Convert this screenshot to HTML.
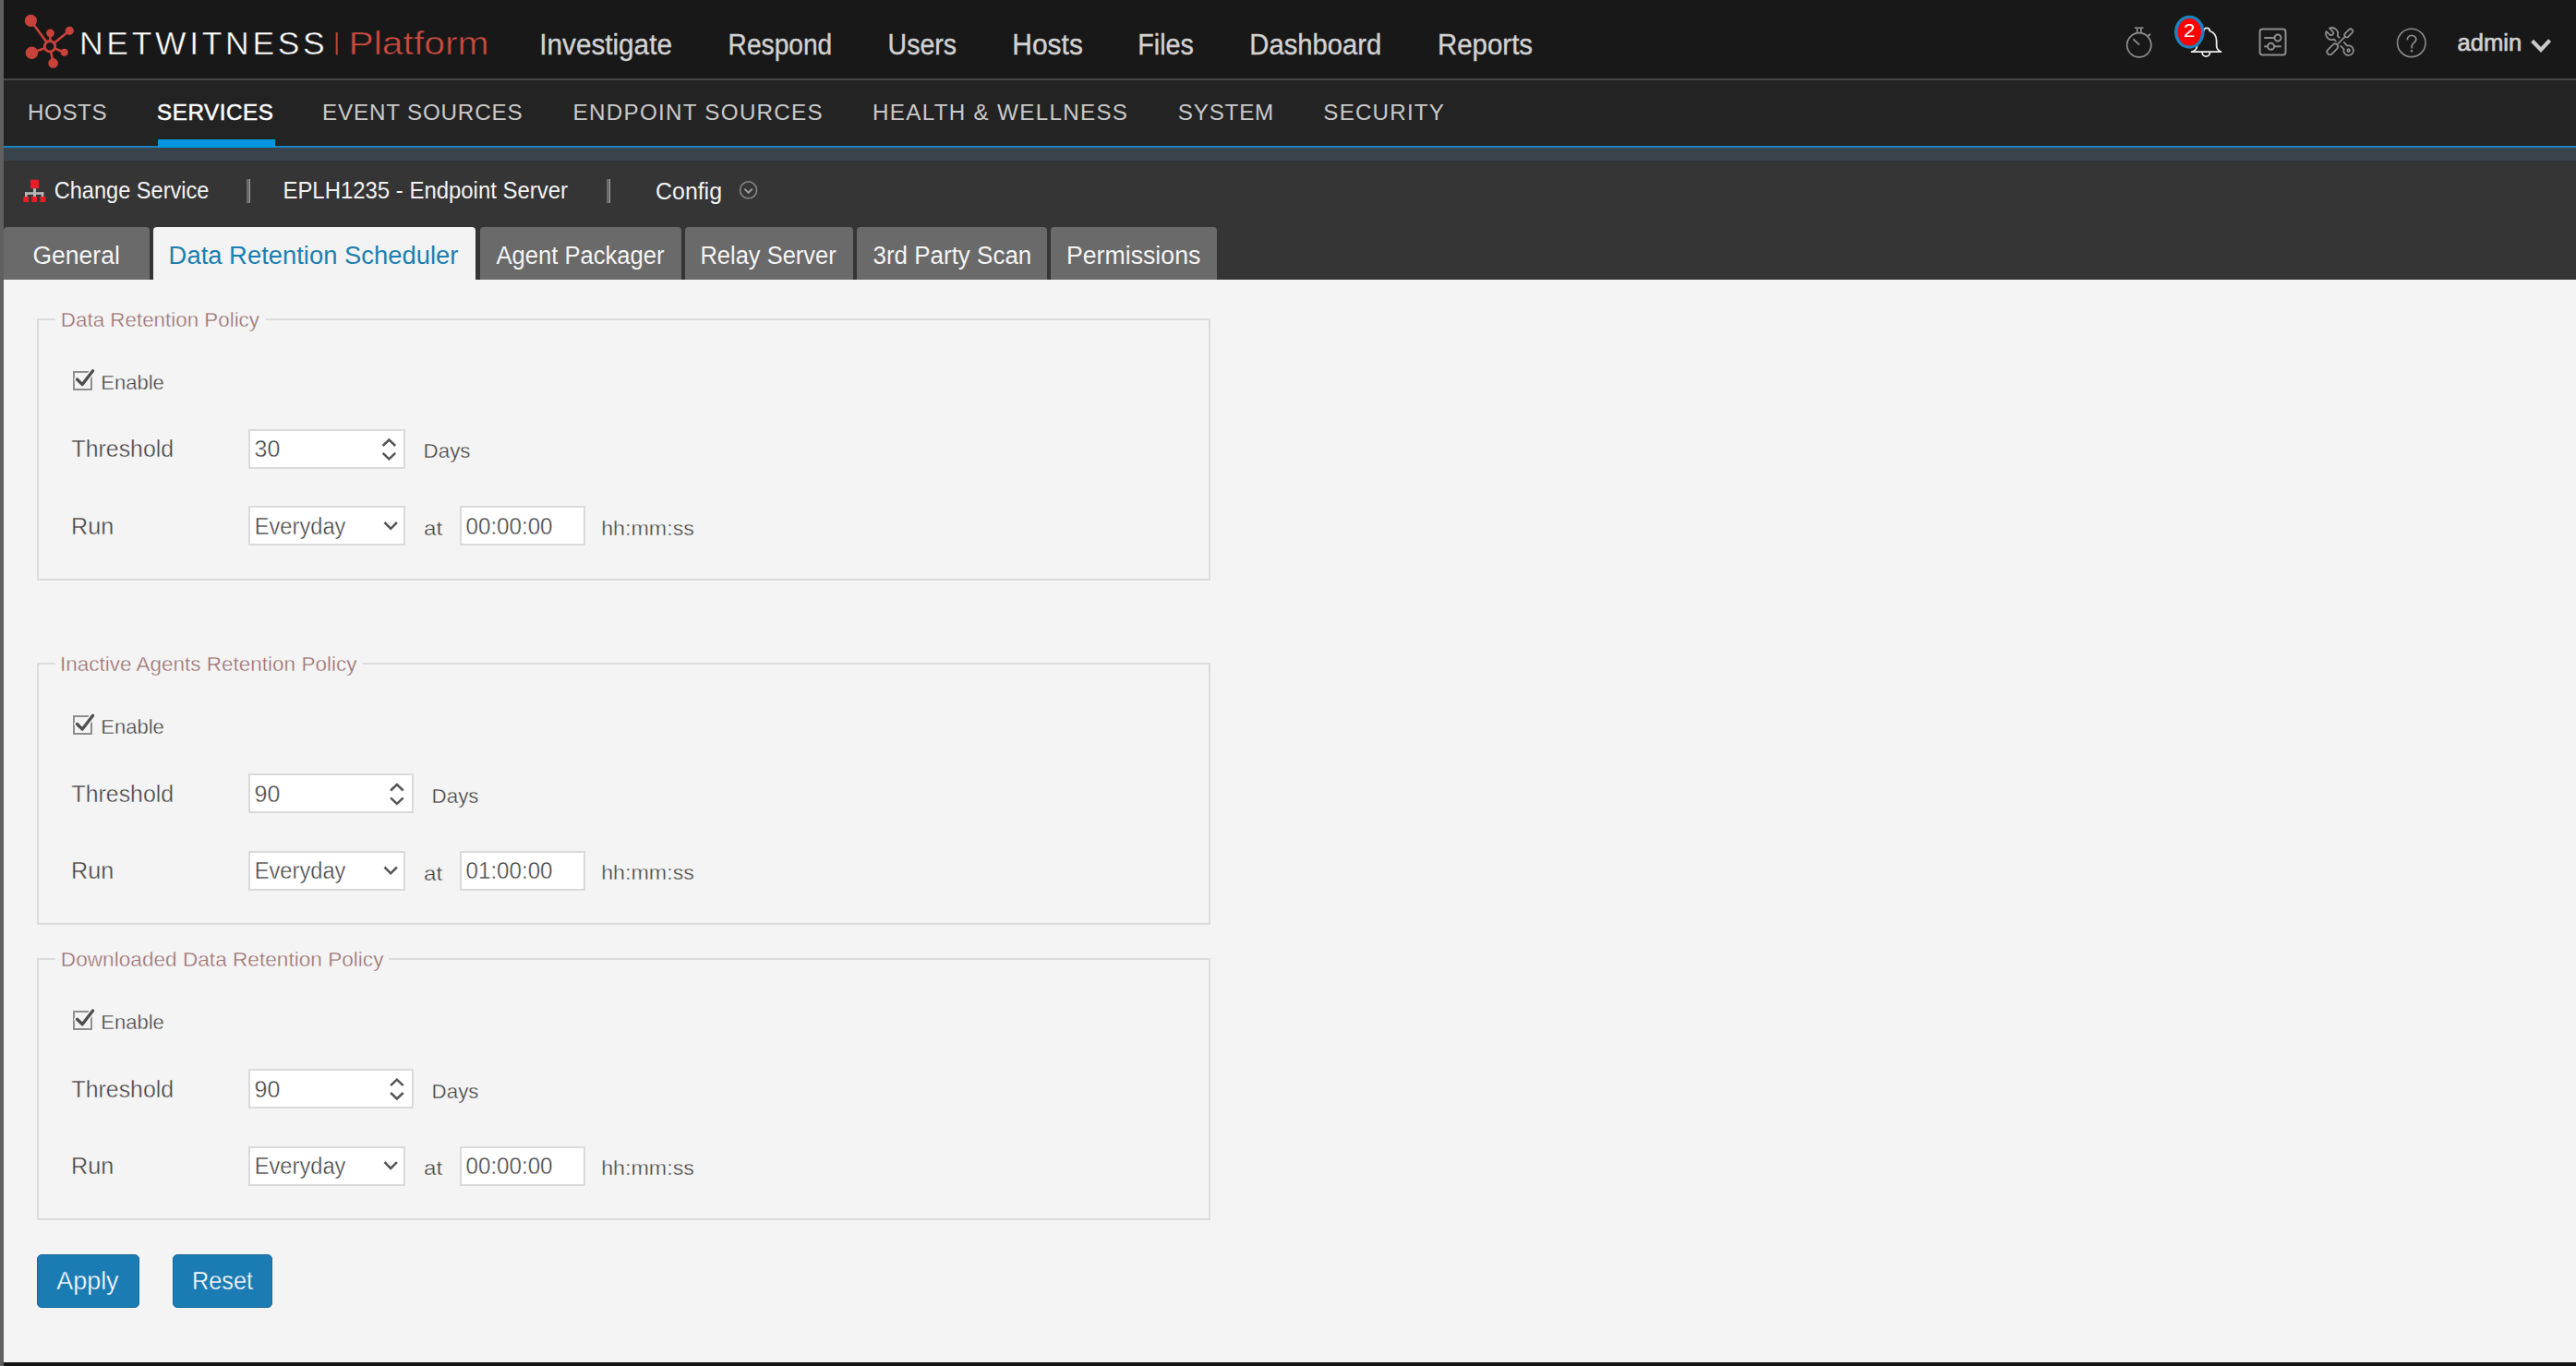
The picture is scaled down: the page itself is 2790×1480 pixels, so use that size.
<!DOCTYPE html><html><head><meta charset="utf-8"><title>NetWitness Platform - Data Retention Scheduler</title><style>html,body{margin:0;padding:0;}body{width:2790px;height:1480px;overflow:hidden;position:relative;background:#f4f4f4;font-family:"Liberation Sans", sans-serif;}.a{position:absolute;box-sizing:border-box;}svg{position:absolute;left:0;top:0;}svg text{font-family:"Liberation Sans",sans-serif;white-space:pre;}</style></head><body><header>
<div class="a" style="left:0px;top:0px;width:2790px;height:85px;background:#181818"></div>
<div class="a" style="left:0px;top:85px;width:2790px;height:2px;background:#474747"></div>
</header><nav>
<div class="a" style="left:0px;top:87px;width:2790px;height:71px;background:#232323"></div>
<div class="a" style="left:0px;top:158px;width:2790px;height:2px;background:#1983bf"></div>
<div class="a" style="left:170.5px;top:151px;width:127px;height:9px;background:#0096df"></div>
<div class="a" style="left:0px;top:160px;width:2790px;height:14px;background:#39434b"></div>
</nav><section>
<div class="a" style="left:0px;top:174px;width:2790px;height:129px;background:#353535"></div>
<div class="a" style="left:267px;top:194px;width:3px;height:26px;background:#696969"></div>
<div class="a" style="left:270px;top:194px;width:1px;height:26px;background:#9e9e9e"></div>
<div class="a" style="left:657px;top:194px;width:3px;height:26px;background:#696969"></div>
<div class="a" style="left:660px;top:194px;width:1px;height:26px;background:#9e9e9e"></div>
<div class="a" style="left:4px;top:246px;width:158px;height:57px;background:#6a6a6a;border-radius:4px 4px 0 0"></div>
<div class="a" style="left:166px;top:246px;width:349px;height:57px;background:#f3f3f3;border-radius:4px 4px 0 0"></div>
<div class="a" style="left:520px;top:246px;width:218px;height:57px;background:#6a6a6a;border-radius:4px 4px 0 0"></div>
<div class="a" style="left:742px;top:246px;width:182px;height:57px;background:#6a6a6a;border-radius:4px 4px 0 0"></div>
<div class="a" style="left:928px;top:246px;width:206px;height:57px;background:#6a6a6a;border-radius:4px 4px 0 0"></div>
<div class="a" style="left:1138px;top:246px;width:180px;height:57px;background:#6a6a6a;border-radius:4px 4px 0 0"></div>
</section><main>
<div class="a" style="left:0px;top:303px;width:2790px;height:1173px;background:#f4f4f4"></div>
<div class="a" style="left:40px;top:345px;width:1271px;height:284px;border:2px solid #dcdcdc"></div>
<div class="a" style="left:60px;top:343px;width:228px;height:6px;background:#f4f4f4"></div>
<div class="a" style="left:79px;top:402px;width:21px;height:21px;border:2px solid #8e8e8e;background:#f4f4f4"></div>
<div class="a" style="left:269px;top:465px;width:170px;height:43px;border:2px solid #dadada;background:#fff"></div>
<div class="a" style="left:269px;top:548px;width:170px;height:43px;border:2px solid #dadada;background:#fff"></div>
<div class="a" style="left:498px;top:548px;width:136px;height:43px;border:2px solid #dadada;background:#fff"></div>
<div class="a" style="left:40px;top:718px;width:1271px;height:284px;border:2px solid #dcdcdc"></div>
<div class="a" style="left:60px;top:716px;width:333px;height:6px;background:#f4f4f4"></div>
<div class="a" style="left:79px;top:775px;width:21px;height:21px;border:2px solid #8e8e8e;background:#f4f4f4"></div>
<div class="a" style="left:269px;top:838px;width:179px;height:43px;border:2px solid #dadada;background:#fff"></div>
<div class="a" style="left:269px;top:922px;width:170px;height:43px;border:2px solid #dadada;background:#fff"></div>
<div class="a" style="left:498px;top:922px;width:136px;height:43px;border:2px solid #dadada;background:#fff"></div>
<div class="a" style="left:40px;top:1038px;width:1271px;height:284px;border:2px solid #dcdcdc"></div>
<div class="a" style="left:60px;top:1036px;width:361px;height:6px;background:#f4f4f4"></div>
<div class="a" style="left:79px;top:1095px;width:21px;height:21px;border:2px solid #8e8e8e;background:#f4f4f4"></div>
<div class="a" style="left:269px;top:1158px;width:179px;height:43px;border:2px solid #dadada;background:#fff"></div>
<div class="a" style="left:269px;top:1242px;width:170px;height:43px;border:2px solid #dadada;background:#fff"></div>
<div class="a" style="left:498px;top:1242px;width:136px;height:43px;border:2px solid #dadada;background:#fff"></div>
<div class="a" style="left:40px;top:1358.5px;width:110.5px;height:58px;background:#1b7cb4;border:1px solid #15699c;border-radius:5px"></div>
<div class="a" style="left:187.3px;top:1358.5px;width:108px;height:58px;background:#1b7cb4;border:1px solid #15699c;border-radius:5px"></div>
</main>
<div class="a" style="left:0px;top:1476px;width:2790px;height:4px;background:#141414"></div>
<div class="a" style="left:0px;top:0px;width:4px;height:1480px;background:#606060"></div><svg width="2790" height="1480" viewBox="0 0 2790 1480"><g fill="#c9423a" stroke="#c9423a">
<g stroke-width="2.6" stroke-linecap="round"><line x1="33.4" y1="22.4" x2="54" y2="50.2"/><line x1="54.5" y1="35.8" x2="54.3" y2="50"/><line x1="75.3" y1="33.3" x2="54" y2="50.2"/><line x1="34.4" y1="57.3" x2="54" y2="50.2"/><line x1="69.7" y1="56.7" x2="54" y2="50.2"/><line x1="57.6" y1="68.4" x2="54" y2="50.2"/></g>
<g stroke="none"><circle cx="33.4" cy="22.4" r="6.6"/><circle cx="54.5" cy="35.8" r="4.4"/><circle cx="75.3" cy="33.3" r="4.6"/><circle cx="34.4" cy="57.3" r="6.7"/><circle cx="69.7" cy="56.7" r="4"/><circle cx="57.6" cy="68.4" r="5.3"/></g>
<circle cx="54" cy="50.2" r="5.7" fill="#181818" stroke-width="2.8"/>
</g>
<rect x="363.7" y="35" width="2" height="24.4" fill="#c0453b"/>
<g fill="none" stroke="#8c8c8c" stroke-width="1.7">
<circle cx="2316.8" cy="48.8" r="13.1"/>
<line x1="2312" y1="30.2" x2="2321.6" y2="30.2" stroke-width="1.6"/>
<line x1="2314.7" y1="30.5" x2="2314.7" y2="35.7"/><line x1="2318.9" y1="30.5" x2="2318.9" y2="35.7"/>
<line x1="2326.6" y1="39" x2="2329" y2="36.8" stroke-width="2.2"/>
<line x1="2310.4" y1="42.4" x2="2317.2" y2="48.6" stroke-width="1.9"/>
</g>
<g fill="none" stroke="#eeeeee" stroke-width="1.8" stroke-linejoin="round" stroke-linecap="round">
<path d="M2373.6 56.2 H2405.4"/>
<path d="M2374.6 56 C2377.6 54.6 2379.4 53 2379.5 50 V44.5 C2379.5 38.8 2382.2 35.2 2386.9 33.5 A3 3 0 0 1 2393.3 33.5 C2398 35.2 2400.7 38.8 2400.7 44.5 V50 C2400.8 53 2402.4 54.6 2405.2 56"/>
<path d="M2385.2 57 A4.1 4.1 0 0 0 2393.4 57"/>
</g>
<ellipse cx="2371.3" cy="34.7" rx="16.3" ry="18" fill="#1a82bd"/>
<ellipse cx="2371.3" cy="34.7" rx="12.7" ry="14.8" fill="#ff0000"/>
<g fill="none" stroke="#8c8c8c" stroke-width="2">
<rect x="2447.6" y="31.6" width="27.9" height="27.9" rx="3"/>
<line x1="2452.2" y1="41" x2="2463.3" y2="41"/><circle cx="2467" cy="41" r="3.5"/>
<line x1="2452.2" y1="50.3" x2="2456" y2="50.3"/><circle cx="2459.6" cy="50.3" r="3.5"/><line x1="2463.2" y1="50.3" x2="2470.8" y2="50.3"/>
</g>
<g fill="none" stroke="#8c8c8c" stroke-width="1.8" stroke-linejoin="round">
<g transform="translate(2525.6 36.6) rotate(45)"><path d="M-6.04 -2.4 A6.5 6.5 0 0 1 5.96 -2.6 L20.9 -2.6 A5.3 5.3 0 1 1 20.9 2.6 L5.96 2.6 A6.5 6.5 0 0 1 -6.04 2.4 L-1.2 2.4 A2.4 2.4 0 0 0 -1.2 -2.4 Z"/><circle cx="25.5" cy="0" r="1.3"/></g>
<g transform="translate(2521.3 58.3) rotate(-45)"><line x1="13" y1="0" x2="27.5" y2="0" stroke="#181818" stroke-width="6"/><rect x="-1" y="-4.3" width="16" height="8.6" rx="4.3" fill="#181818" stroke="#181818" stroke-width="3"/><rect x="0" y="-3.1" width="14" height="6.2" rx="3.1"/><line x1="14" y1="0" x2="27" y2="0"/><rect x="26.5" y="-2.4" width="10.5" height="4.8" rx="2.4"/></g>
</g>
<g fill="none" stroke="#8c8c8c" stroke-width="1.6">
<circle cx="2611.8" cy="46.4" r="15.2"/>
<path d="M2607.3 43.2 C2607.3 40 2609.5 38.3 2612 38.3 C2614.7 38.3 2616.8 40.2 2616.8 42.8 C2616.8 46 2612.2 46.8 2612.2 50 V52.5" stroke-width="1.8"/>
</g><circle cx="2612" cy="55.3" r="1.3" fill="#8c8c8c"/>
<path d="M2742.6 44.2 L2752 54 L2761.6 43.6" fill="none" stroke="#c8c8c8" stroke-width="4.2" stroke-linejoin="miter"/>
<rect x="32.9" y="194.7" width="9.2" height="9.5" fill="#e61e28"/>
<g fill="#b8b8b8"><rect x="36" y="204.2" width="3" height="5.5"/><rect x="27" y="208.2" width="20.3" height="2.6"/><rect x="27" y="208.2" width="2.5" height="5"/><rect x="36" y="208.2" width="3" height="5"/><rect x="44.8" y="208.2" width="2.5" height="5"/></g>
<g fill="#e61e28"><rect x="25.3" y="213" width="5.8" height="6" /><rect x="34.2" y="213" width="5.9" height="6"/><rect x="43.4" y="213" width="6" height="6"/></g>
<circle cx="810.6" cy="205.9" r="9" fill="none" stroke="#7f7f7f" stroke-width="1.8"/>
<path d="M806.4 204.6 L810.6 208.8 L814.8 204.6" fill="none" stroke="#9a9a9a" stroke-width="2"/>
<path d="M83.5 411 L89.2 416.6 L100.6 401.8" fill="none" stroke="#f4f4f4" stroke-width="6.4" stroke-linecap="round" stroke-linejoin="round" transform="translate(0 0.00)"/>
<path d="M83.5 411 L89.2 416.6 L100.6 401.8" fill="none" stroke="#4e4e4e" stroke-width="3.3" stroke-linecap="round" stroke-linejoin="round" transform="translate(0 0.00)"/>
<path d="M414.60 483 L421.40 476.5 L428.20 483 M414.60 490.8 L421.40 497.3 L428.20 490.8" fill="none" stroke="#555" stroke-width="2.5" stroke-linejoin="miter" transform="translate(0 0.00)"/>
<path d="M416.5 566 L423.2 572.8 L429.9 566" fill="none" stroke="#555" stroke-width="2.5" transform="translate(0 0.00)"/>
<path d="M83.5 411 L89.2 416.6 L100.6 401.8" fill="none" stroke="#f4f4f4" stroke-width="6.4" stroke-linecap="round" stroke-linejoin="round" transform="translate(0 373.50)"/>
<path d="M83.5 411 L89.2 416.6 L100.6 401.8" fill="none" stroke="#4e4e4e" stroke-width="3.3" stroke-linecap="round" stroke-linejoin="round" transform="translate(0 373.50)"/>
<path d="M423.10 483 L429.90 476.5 L436.70 483 M423.10 490.8 L429.90 497.3 L436.70 490.8" fill="none" stroke="#555" stroke-width="2.5" stroke-linejoin="miter" transform="translate(0 373.50)"/>
<path d="M416.5 566 L423.2 572.8 L429.9 566" fill="none" stroke="#555" stroke-width="2.5" transform="translate(0 373.50)"/>
<path d="M83.5 411 L89.2 416.6 L100.6 401.8" fill="none" stroke="#f4f4f4" stroke-width="6.4" stroke-linecap="round" stroke-linejoin="round" transform="translate(0 693.20)"/>
<path d="M83.5 411 L89.2 416.6 L100.6 401.8" fill="none" stroke="#4e4e4e" stroke-width="3.3" stroke-linecap="round" stroke-linejoin="round" transform="translate(0 693.20)"/>
<path d="M423.10 483 L429.90 476.5 L436.70 483 M423.10 490.8 L429.90 497.3 L436.70 490.8" fill="none" stroke="#555" stroke-width="2.5" stroke-linejoin="miter" transform="translate(0 693.20)"/>
<path d="M416.5 566 L423.2 572.8 L429.9 566" fill="none" stroke="#555" stroke-width="2.5" transform="translate(0 693.20)"/><text id="nw" x="86.06" y="59.00" font-size="35.50" font-weight="normal" fill="#ffffff" stroke="#181818" stroke-width="0.5" textLength="265.74" lengthAdjust="spacing">NETWITNESS</text>
<text id="plat" x="377.40" y="59.40" font-size="35.50" font-weight="normal" fill="#cf4b40" stroke="#181818" stroke-width="0.6" textLength="152.30" lengthAdjust="spacingAndGlyphs">Platform</text>
<text id="nav0" x="584.30" y="58.60" font-size="30.60" font-weight="normal" fill="#d2d2d2" stroke="#d2d2d2" stroke-width="0.35" textLength="143.60" lengthAdjust="spacingAndGlyphs">Investigate</text>
<text id="nav1" x="788.62" y="58.60" font-size="30.60" font-weight="normal" fill="#d2d2d2" stroke="#d2d2d2" stroke-width="0.35" textLength="112.60" lengthAdjust="spacingAndGlyphs">Respond</text>
<text id="nav2" x="961.62" y="58.60" font-size="30.60" font-weight="normal" fill="#d2d2d2" stroke="#d2d2d2" stroke-width="0.35" textLength="74.44" lengthAdjust="spacingAndGlyphs">Users</text>
<text id="nav3" x="1096.30" y="58.60" font-size="30.60" font-weight="normal" fill="#d2d2d2" stroke="#d2d2d2" stroke-width="0.35" textLength="76.60" lengthAdjust="spacingAndGlyphs">Hosts</text>
<text id="nav4" x="1232.30" y="58.60" font-size="30.60" font-weight="normal" fill="#d2d2d2" stroke="#d2d2d2" stroke-width="0.35" textLength="60.60" lengthAdjust="spacingAndGlyphs">Files</text>
<text id="nav5" x="1353.30" y="58.60" font-size="30.60" font-weight="normal" fill="#d2d2d2" stroke="#d2d2d2" stroke-width="0.35" textLength="142.92" lengthAdjust="spacingAndGlyphs">Dashboard</text>
<text id="nav6" x="1556.88" y="58.60" font-size="30.60" font-weight="normal" fill="#d2d2d2" stroke="#d2d2d2" stroke-width="0.35" textLength="103.18" lengthAdjust="spacingAndGlyphs">Reports</text>
<text id="admin" x="2661.58" y="55.30" font-size="26.00" font-weight="normal" fill="#d0d0d0" stroke="#d0d0d0" stroke-width="0.7" textLength="69.70" lengthAdjust="spacingAndGlyphs">admin</text>
<text id="badge" x="2364.94" y="40.00" font-size="20.30" font-weight="normal" fill="#ffffff" textLength="12.46" lengthAdjust="spacingAndGlyphs">2</text>
<text id="sub0" x="30.04" y="130.00" font-size="24.20" font-weight="normal" fill="#c9c9c9" textLength="85.52" lengthAdjust="spacing">HOSTS</text>
<text id="sub1" x="170.10" y="130.00" font-size="24.20" font-weight="normal" fill="#ffffff" stroke="#ffffff" stroke-width="0.5" textLength="125.78" lengthAdjust="spacing">SERVICES</text>
<text id="sub2" x="349.04" y="130.00" font-size="24.20" font-weight="normal" fill="#c9c9c9" textLength="216.52" lengthAdjust="spacing">EVENT SOURCES</text>
<text id="sub3" x="620.62" y="130.00" font-size="24.20" font-weight="normal" fill="#c9c9c9" textLength="270.02" lengthAdjust="spacing">ENDPOINT SOURCES</text>
<text id="sub4" x="945.04" y="130.00" font-size="24.20" font-weight="normal" fill="#c9c9c9" textLength="275.94" lengthAdjust="spacing">HEALTH &amp; WELLNESS</text>
<text id="sub5" x="1275.86" y="130.00" font-size="24.20" font-weight="normal" fill="#c9c9c9" textLength="103.36" lengthAdjust="spacing">SYSTEM</text>
<text id="sub6" x="1433.36" y="130.00" font-size="24.20" font-weight="normal" fill="#c9c9c9" textLength="130.54" lengthAdjust="spacing">SECURITY</text>
<text id="chg" x="58.68" y="215.30" font-size="26.30" font-weight="normal" fill="#f2f2f2" textLength="167.80" lengthAdjust="spacingAndGlyphs">Change Service</text>
<text id="epl" x="306.46" y="215.30" font-size="26.30" font-weight="normal" fill="#f2f2f2" textLength="308.54" lengthAdjust="spacingAndGlyphs">EPLH1235 - Endpoint Server</text>
<text id="cfg" x="710.10" y="215.50" font-size="26.30" font-weight="normal" fill="#f2f2f2" textLength="71.88" lengthAdjust="spacingAndGlyphs">Config</text>
<text id="tab0" x="35.44" y="285.50" font-size="27.00" font-weight="normal" fill="#f4f4f4" textLength="94.44" lengthAdjust="spacingAndGlyphs">General</text>
<text id="tab1" x="182.62" y="285.50" font-size="27.00" font-weight="normal" fill="#1c7fb2" textLength="313.88" lengthAdjust="spacingAndGlyphs">Data Retention Scheduler</text>
<text id="tab2" x="537.42" y="285.50" font-size="27.00" font-weight="normal" fill="#f4f4f4" textLength="182.08" lengthAdjust="spacingAndGlyphs">Agent Packager</text>
<text id="tab3" x="758.46" y="285.50" font-size="27.00" font-weight="normal" fill="#f4f4f4" textLength="147.28" lengthAdjust="spacingAndGlyphs">Relay Server</text>
<text id="tab4" x="945.44" y="285.50" font-size="27.00" font-weight="normal" fill="#f4f4f4" textLength="171.86" lengthAdjust="spacingAndGlyphs">3rd Party Scan</text>
<text id="tab5" x="1154.88" y="285.50" font-size="27.00" font-weight="normal" fill="#f4f4f4" textLength="145.52" lengthAdjust="spacingAndGlyphs">Permissions</text>
<text id="leg0" x="65.86" y="353.50" font-size="21.70" font-weight="normal" fill="#9a6e6e" stroke="#f4f4f4" stroke-width="0.35" textLength="215.14" lengthAdjust="spacingAndGlyphs">Data Retention Policy</text>
<text id="en0" x="109.28" y="421.80" font-size="22.40" font-weight="normal" fill="#434343" stroke="#f4f4f4" stroke-width="0.35" textLength="68.62" lengthAdjust="spacingAndGlyphs">Enable</text>
<text id="th0" x="77.60" y="495.40" font-size="26.50" font-weight="normal" fill="#434343" stroke="#f4f4f4" stroke-width="0.4" textLength="110.46" lengthAdjust="spacingAndGlyphs">Threshold</text>
<text id="num0" x="275.60" y="495.30" font-size="26.20" font-weight="normal" fill="#434343" stroke="#ffffff" stroke-width="0.4" textLength="27.80" lengthAdjust="spacingAndGlyphs">30</text>
<text id="days0" x="458.62" y="496.40" font-size="21.80" font-weight="normal" fill="#434343" stroke="#f4f4f4" stroke-width="0.35" textLength="50.86" lengthAdjust="spacingAndGlyphs">Days</text>
<text id="run0" x="77.04" y="578.80" font-size="26.50" font-weight="normal" fill="#434343" stroke="#f4f4f4" stroke-width="0.4" textLength="46.26" lengthAdjust="spacingAndGlyphs">Run</text>
<text id="ev0" x="275.70" y="578.70" font-size="25.40" font-weight="normal" fill="#434343" stroke="#ffffff" stroke-width="0.4" textLength="98.72" lengthAdjust="spacingAndGlyphs">Everyday</text>
<text id="at0" x="459.02" y="580.10" font-size="21.80" font-weight="normal" fill="#434343" stroke="#f4f4f4" stroke-width="0.35" textLength="20.22" lengthAdjust="spacingAndGlyphs">at</text>
<text id="time0" x="504.60" y="578.80" font-size="25.90" font-weight="normal" fill="#434343" stroke="#ffffff" stroke-width="0.4" textLength="93.88" lengthAdjust="spacingAndGlyphs">00:00:00</text>
<text id="hh0" x="651.20" y="579.80" font-size="22.00" font-weight="normal" fill="#434343" stroke="#f4f4f4" stroke-width="0.35" textLength="100.70" lengthAdjust="spacingAndGlyphs">hh:mm:ss</text>
<text id="leg1" x="64.96" y="727.00" font-size="21.70" font-weight="normal" fill="#9a6e6e" stroke="#f4f4f4" stroke-width="0.35" textLength="321.46" lengthAdjust="spacingAndGlyphs">Inactive Agents Retention Policy</text>
<text id="en1" x="109.28" y="795.30" font-size="22.40" font-weight="normal" fill="#434343" stroke="#f4f4f4" stroke-width="0.35" textLength="68.62" lengthAdjust="spacingAndGlyphs">Enable</text>
<text id="th1" x="77.60" y="868.90" font-size="26.50" font-weight="normal" fill="#434343" stroke="#f4f4f4" stroke-width="0.4" textLength="110.46" lengthAdjust="spacingAndGlyphs">Threshold</text>
<text id="num1" x="275.60" y="868.80" font-size="26.20" font-weight="normal" fill="#434343" stroke="#ffffff" stroke-width="0.4" textLength="27.80" lengthAdjust="spacingAndGlyphs">90</text>
<text id="days1" x="467.62" y="869.90" font-size="21.80" font-weight="normal" fill="#434343" stroke="#f4f4f4" stroke-width="0.35" textLength="50.86" lengthAdjust="spacingAndGlyphs">Days</text>
<text id="run1" x="77.04" y="952.30" font-size="26.50" font-weight="normal" fill="#434343" stroke="#f4f4f4" stroke-width="0.4" textLength="46.26" lengthAdjust="spacingAndGlyphs">Run</text>
<text id="ev1" x="275.70" y="952.20" font-size="25.40" font-weight="normal" fill="#434343" stroke="#ffffff" stroke-width="0.4" textLength="98.72" lengthAdjust="spacingAndGlyphs">Everyday</text>
<text id="at1" x="459.02" y="953.60" font-size="21.80" font-weight="normal" fill="#434343" stroke="#f4f4f4" stroke-width="0.35" textLength="20.22" lengthAdjust="spacingAndGlyphs">at</text>
<text id="time1" x="504.60" y="952.30" font-size="25.90" font-weight="normal" fill="#434343" stroke="#ffffff" stroke-width="0.4" textLength="93.88" lengthAdjust="spacingAndGlyphs">01:00:00</text>
<text id="hh1" x="651.20" y="953.30" font-size="22.00" font-weight="normal" fill="#434343" stroke="#f4f4f4" stroke-width="0.35" textLength="100.70" lengthAdjust="spacingAndGlyphs">hh:mm:ss</text>
<text id="leg2" x="65.86" y="1046.70" font-size="21.70" font-weight="normal" fill="#9a6e6e" stroke="#f4f4f4" stroke-width="0.35" textLength="349.64" lengthAdjust="spacingAndGlyphs">Downloaded Data Retention Policy</text>
<text id="en2" x="109.28" y="1115.00" font-size="22.40" font-weight="normal" fill="#434343" stroke="#f4f4f4" stroke-width="0.35" textLength="68.62" lengthAdjust="spacingAndGlyphs">Enable</text>
<text id="th2" x="77.60" y="1188.60" font-size="26.50" font-weight="normal" fill="#434343" stroke="#f4f4f4" stroke-width="0.4" textLength="110.46" lengthAdjust="spacingAndGlyphs">Threshold</text>
<text id="num2" x="275.60" y="1188.50" font-size="26.20" font-weight="normal" fill="#434343" stroke="#ffffff" stroke-width="0.4" textLength="27.80" lengthAdjust="spacingAndGlyphs">90</text>
<text id="days2" x="467.62" y="1189.60" font-size="21.80" font-weight="normal" fill="#434343" stroke="#f4f4f4" stroke-width="0.35" textLength="50.86" lengthAdjust="spacingAndGlyphs">Days</text>
<text id="run2" x="77.04" y="1272.00" font-size="26.50" font-weight="normal" fill="#434343" stroke="#f4f4f4" stroke-width="0.4" textLength="46.26" lengthAdjust="spacingAndGlyphs">Run</text>
<text id="ev2" x="275.70" y="1271.90" font-size="25.40" font-weight="normal" fill="#434343" stroke="#ffffff" stroke-width="0.4" textLength="98.72" lengthAdjust="spacingAndGlyphs">Everyday</text>
<text id="at2" x="459.02" y="1273.30" font-size="21.80" font-weight="normal" fill="#434343" stroke="#f4f4f4" stroke-width="0.35" textLength="20.22" lengthAdjust="spacingAndGlyphs">at</text>
<text id="time2" x="504.60" y="1272.00" font-size="25.90" font-weight="normal" fill="#434343" stroke="#ffffff" stroke-width="0.4" textLength="93.88" lengthAdjust="spacingAndGlyphs">00:00:00</text>
<text id="hh2" x="651.20" y="1273.00" font-size="22.00" font-weight="normal" fill="#434343" stroke="#f4f4f4" stroke-width="0.35" textLength="100.70" lengthAdjust="spacingAndGlyphs">hh:mm:ss</text>
<text id="apply" x="61.26" y="1397.20" font-size="27.60" font-weight="normal" fill="#ffffff" stroke="#1b7cb4" stroke-width="0.4" textLength="67.32" lengthAdjust="spacingAndGlyphs">Apply</text>
<text id="reset" x="207.88" y="1397.20" font-size="27.60" font-weight="normal" fill="#ffffff" stroke="#1b7cb4" stroke-width="0.4" textLength="66.12" lengthAdjust="spacingAndGlyphs">Reset</text></svg></body></html>
